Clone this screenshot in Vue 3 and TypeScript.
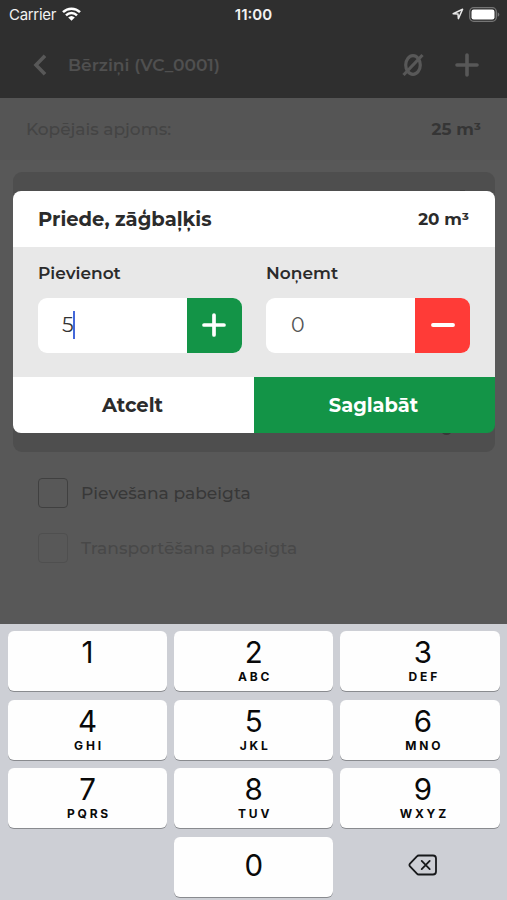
<script setup lang="ts">
import { ref } from 'vue'

interface Key {
  digit: string
  letters: string
}

const added = ref('5')
const removed = ref('0')

const keys: Key[] = [
  { digit: '1', letters: '' },
  { digit: '2', letters: 'ABC' },
  { digit: '3', letters: 'DEF' },
  { digit: '4', letters: 'GHI' },
  { digit: '5', letters: 'JKL' },
  { digit: '6', letters: 'MNO' },
  { digit: '7', letters: 'PQRS' },
  { digit: '8', letters: 'TUV' },
  { digit: '9', letters: 'WXYZ' },
]

function press(digit: string) {
  added.value += digit
}
function erase() {
  added.value = added.value.slice(0, -1)
}
</script>

<template>
  <div class="phone">
    <header class="top">
      <div class="status">
        <div class="carrier">
          <span>Carrier</span>
          <svg width="19" height="14" viewBox="0 0 19 14">
            <g fill="none" stroke="#fff" stroke-width="2.5">
              <path d="M1 5.1a12.2 12.2 0 0 1 17 0" />
              <path d="M4 8.3a8 8 0 0 1 11 0" />
            </g>
            <path d="M6.2 10.6a4.8 4.8 0 0 1 6.6 0L9.5 13.8z" fill="#fff" />
          </svg>
        </div>
        <span class="clock">11:00</span>
        <div class="indicators">
          <svg width="12" height="12" viewBox="0 0 12 12">
            <path d="M1.2 5.7 10.6 1.2 6.4 10.6 6 6.1z" fill="none" stroke="#e8e8e8" stroke-width="1.5" stroke-linejoin="round" />
          </svg>
          <svg width="31" height="15" viewBox="0 0 31 15">
            <rect x=".7" y=".7" width="26.6" height="13.6" rx="4" fill="none" stroke="#757575" stroke-width="1.3" />
            <rect x="2.5" y="2.5" width="23" height="10" rx="2.2" fill="#fff" />
            <path d="M28.7 5.2v4.6q1.6-.7 1.6-2.3t-1.6-2.3z" fill="#757575" />
          </svg>
        </div>
      </div>
      <nav class="nav">
        <svg class="back" width="14" height="22" viewBox="0 0 14 22">
          <path d="M12 1.7 3 11l9 9.3" fill="none" stroke="#585858" stroke-width="3.6" />
        </svg>
        <span class="title">Bērziņi (VC_0001)</span>
        <svg class="empty" width="24" height="24" viewBox="0 0 24 24">
          <g fill="none" stroke="#585858" stroke-width="3.2">
            <ellipse cx="12" cy="12" rx="7.3" ry="9.3" />
            <path d="M2.5 22 21.5 2" />
          </g>
        </svg>
        <svg width="24" height="24" viewBox="0 0 24 24">
          <path d="M12 2v20M2 12h20" fill="none" stroke="#585858" stroke-width="3.6" stroke-linecap="round" />
        </svg>
      </nav>
    </header>

    <section class="total">
      <span class="total-label">Kopējais apjoms:</span>
      <span class="total-value">25 m³</span>
    </section>

    <main class="content">
      <div class="card">
        <i class="mark upper"></i>
        <i class="mark lower"></i>
      </div>
      <div class="check">
        <i class="box"></i><span>Pievešana pabeigta</span>
      </div>
      <div class="check disabled">
        <i class="box"></i><span>Transportēšana pabeigta</span>
      </div>
    </main>

    <section class="keyboard">
      <button v-for="key in keys" :key="key.digit" class="key" @click="press(key.digit)">
        <span class="digit">{{ key.digit }}</span>
        <span class="letters">{{ key.letters }}</span>
      </button>
      <span></span>
      <button class="key zero" @click="press('0')"><span class="digit">0</span></button>
      <button class="erase" @click="erase">
        <svg width="30" height="22" viewBox="0 0 30 22">
          <g fill="none" stroke="#17191b" stroke-width="1.8" stroke-linejoin="round" stroke-linecap="round">
            <path d="M10.7 1.5H25q3 0 3 3v13q0 3-3 3H10.7q-1 0-1.8-.9L2 12.3q-1.1-1.3 0-2.6L8.9 2.4q.8-.9 1.8-.9z" />
            <path d="m13.7 6.9 8 8.2m0-8.2-8 8.2" />
          </g>
        </svg>
      </button>
    </section>

    <div class="dialog">
      <div class="dialog-head">
        <span class="species">Priede, zāģbaļķis</span>
        <span class="volume">20 m³</span>
      </div>
      <div class="dialog-body">
        <div class="field">
          <span>Pievienot</span>
          <div class="input">
            <div class="value active"><span>{{ added }}</span><i class="caret"></i></div>
            <button class="step plus">
              <svg width="24" height="24" viewBox="0 0 24 24">
                <path d="M12 2v20M2 12h20" fill="none" stroke="#fff" stroke-width="3.7" stroke-linecap="round" />
              </svg>
            </button>
          </div>
        </div>
        <div class="field">
          <span>Noņemt</span>
          <div class="input">
            <div class="value"><span>{{ removed }}</span></div>
            <button class="step minus">
              <svg width="24" height="24" viewBox="0 0 24 24">
                <path d="M2 12h20" fill="none" stroke="#fff" stroke-width="3.9" stroke-linecap="round" />
              </svg>
            </button>
          </div>
        </div>
      </div>
      <div class="dialog-actions">
        <button class="cancel">Atcelt</button>
        <button class="save">Saglabāt</button>
      </div>
    </div>
  </div>
</template>

<style>
body {
  margin: 0;
  overflow: hidden;
}
</style>

<style scoped>
* {
  box-sizing: border-box;
}
button {
  border: 0;
  padding: 0;
  background: none;
  font-family: inherit;
}
svg {
  display: block;
  flex: none;
}
.phone {
  position: relative;
  display: flex;
  flex-direction: column;
  width: 507px;
  height: 900px;
  overflow: hidden;
  background: #585858;
  font-family: Montserrat, Inter, sans-serif;
  white-space: nowrap;
}
.top {
  height: 98px;
  background: #2f2f2f;
}
.status {
  display: grid;
  grid-template-columns: 1fr auto 1fr;
  align-items: center;
  height: 28px;
  padding: 0 7px 0 9px;
  font-family: Inter, sans-serif;
  font-size: 15px;
  color: #f2f2f2;
}
.carrier {
  display: flex;
  align-items: center;
  gap: 6px;
}
.carrier span {
  letter-spacing: -0.3px;
}
.clock {
  padding-right: 2px;
  font-weight: 600;
}
.indicators {
  display: flex;
  align-items: center;
  justify-content: flex-end;
  gap: 5px;
}
.nav {
  display: flex;
  align-items: center;
  height: 74px;
  padding: 0 28px 0 33px;
  color: #505050;
}
.title {
  flex: 1;
  margin-left: 21px;
  padding-bottom: 1px;
  font-size: 17.1px;
  font-weight: 600;
}
.empty {
  margin-right: 30px;
}
.total {
  display: flex;
  align-items: center;
  justify-content: space-between;
  height: 62px;
  padding: 0 26px;
  background: #555;
  font-size: 17px;
}
.total-label {
  color: #444;
  font-weight: 500;
}
.total-value {
  color: #353535;
  font-size: 16.8px;
  font-weight: 700;
}
.content {
  flex: 1;
  display: flex;
  flex-direction: column;
  padding: 12px 12px 0 13px;
}
.card {
  display: flex;
  flex-direction: column;
  justify-content: space-between;
  align-items: flex-end;
  height: 280px;
  margin-bottom: 13px;
  padding: 18px 30px 17px;
  border-radius: 9px;
  background: #4e4e4e;
}
.mark {
  height: 10px;
  background: #424242;
}
.upper {
  width: 5px;
}
.lower {
  width: 11px;
  margin-right: 13px;
  border-radius: 0 0 6px 6px;
  background: #383838;
}
.check {
  display: flex;
  align-items: center;
  gap: 13px;
  height: 55px;
  padding-left: 25px;
  font-size: 17.1px;
  font-weight: 500;
  color: #383838;
}
.box {
  width: 30px;
  height: 30px;
  border: 1px solid #404040;
  border-radius: 4px;
}
.disabled {
  color: #484848;
}
.disabled .box {
  border-color: #4f4f4f;
}
.keyboard {
  display: grid;
  grid-template-columns: repeat(3, 1fr);
  grid-auto-rows: 60px;
  gap: 8.5px 7px;
  height: 276px;
  padding: 7px 7.5px 0 8px;
  background: #cdcfd5;
  font-family: Inter, sans-serif;
}
.key {
  display: flex;
  flex-direction: column;
  align-items: center;
  padding-top: 5px;
  border-radius: 6px;
  background: #fefefe;
  box-shadow: 0 1px 0.5px #898b8f;
  color: #090909;
}
.key:nth-child(3n) {
  padding-left: 6px;
}
.digit {
  font-size: 29.5px;
  line-height: 33px;
}
.letters {
  margin-top: 1px;
  padding-left: 2.8px;
  font-size: 12px;
  line-height: 14px;
  font-weight: 700;
  letter-spacing: 2.8px;
}
.zero {
  justify-content: center;
  padding: 0 0 2px;
}
.erase {
  display: flex;
  align-items: center;
  justify-content: center;
  padding: 0 0 3px 7px;
}
.dialog {
  position: absolute;
  left: 13px;
  top: 191px;
  width: 482px;
  height: 242px;
  display: flex;
  flex-direction: column;
  overflow: hidden;
  border-radius: 8px;
  color: #2b2b2b;
}
.dialog-head {
  display: flex;
  align-items: center;
  justify-content: space-between;
  height: 56px;
  padding: 0 26px 0 25px;
  background: #fff;
  font-weight: 700;
}
.species {
  font-size: 19.5px;
}
.volume {
  font-size: 16.8px;
}
.dialog-body {
  display: flex;
  gap: 24px;
  height: 130px;
  padding: 14px 25px 0;
  background: #e8e8e8;
  font-weight: 600;
  font-size: 17px;
}
.field {
  flex: 1;
  line-height: 24px;
}
.input {
  display: flex;
  height: 55px;
  margin-top: 12.5px;
  border-radius: 9px;
  background: #fff;
  overflow: hidden;
}
.value {
  flex: 1;
  display: flex;
  align-items: center;
  padding-left: 25px;
  font-size: 20.5px;
  font-weight: 400;
  color: #555;
}
.active {
  padding-left: 24px;
  color: #333;
}
.caret {
  width: 2px;
  height: 28px;
  margin-left: -1px;
  background: #4468da;
}
.step {
  display: grid;
  place-items: center;
  width: 55px;
}
.plus,
.save {
  background: #139447;
}
.plus {
  padding-right: 1px;
}
.minus {
  background: #ff3b37;
}
.dialog-actions {
  display: grid;
  grid-template-columns: 1fr 1fr;
  height: 56px;
}
.dialog-actions button {
  font-size: 19.5px;
  font-weight: 700;
}
.cancel {
  background: #fff;
  color: #2b2b2b;
}
.dialog-actions .cancel,
.dialog-actions .save {
  padding-right: 2px;
}
.dialog-actions .save {
  color: #fff;
  font-size: 19.4px;
}
</style>
